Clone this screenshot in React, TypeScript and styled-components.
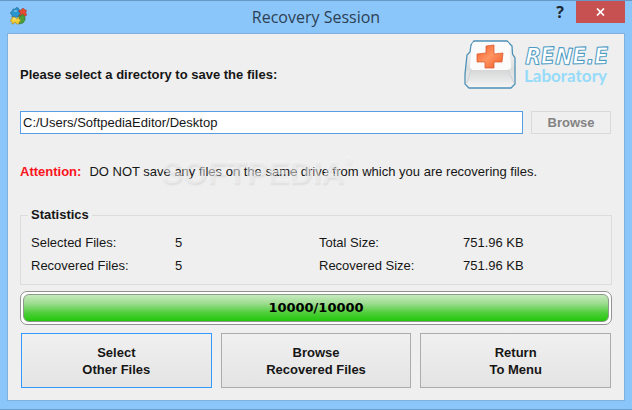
import React, { useState } from "react";
import styled, { createGlobalStyle } from "styled-components";

const GlobalStyle = createGlobalStyle`
  *, *::before, *::after { box-sizing: border-box; }
  body {
    margin: 0;
    font: 13px/16px "Liberation Sans", Arial, sans-serif;
    color: #161616;
    background: #8bc6fb;
  }
`;

const Window = styled.div`
  min-height: 100vh;
  display: flex;
  flex-direction: column;
  padding: 0 7px 8px;
  background: #8bc6fb;
  border-top: 1px solid #6798c4;
  border-bottom: 1px solid #6ca0cf;
`;

const TitleBar = styled.header`
  display: grid;
  grid-template-columns: 1fr auto 1fr;
  align-items: start;
  height: 32px;
`;

const AppIcon = styled.svg`
  margin: 6px 0 0 2px;
`;

const Title = styled.h1`
  margin: 5px 0 0;
  font: 400 16px/22px "Open Sans", sans-serif;
  color: #2d4052;
`;

const Controls = styled.div`
  display: flex;
  justify-content: flex-end;
`;

const HelpButton = styled.button`
  width: 32px;
  height: 22px;
  padding: 0;
  border: 0;
  background: none;
  color: #1c2833;
  font: 700 16px/22px "Open Sans", sans-serif;
`;

const CloseButton = styled.button`
  display: grid;
  place-items: center;
  width: 49px;
  height: 22px;
  padding: 0;
  border: 0;
  background: #c75050;
`;

const Client = styled.main`
  flex: 1;
  display: flex;
  flex-direction: column;
  padding: 6px 12px 12px;
  background: #efefef;
  border: 1px solid #7fb0df;
`;

const Intro = styled.div`
  display: flex;
  justify-content: space-between;
  height: 71px;
`;

const Prompt = styled.label`
  padding-top: 27px;
  font-weight: 700;
`;

const Brand = styled.div`
  display: flex;
  align-items: flex-start;
  gap: 8px;
`;

const PathRow = styled.div`
  display: flex;
  gap: 8px;
  height: 23px;
  padding-right: 1px;
`;

const PathInput = styled.input`
  flex: 1;
  min-width: 0;
  padding: 0 2px;
  border: 1px solid #569de5;
  border-radius: 0;
  outline: none;
  background: #fff;
  color: #161616;
  font: inherit;
`;

const BrowseButton = styled.button`
  width: 80px;
  padding: 0;
  border: 1px solid #d9d9d9;
  background: #efefef;
  color: #838383;
  font: inherit;
  font-weight: 700;
`;

const Notice = styled.p`
  position: relative;
  display: flex;
  gap: 8px;
  margin: 30px 0 0;
`;

const Attention = styled.strong`
  color: #fb1420;
`;

const Watermark = styled.span`
  position: absolute;
  left: 141px;
  top: -10px;
  display: flex;
  font: 700 32px/36px "Liberation Sans", Arial, sans-serif;
  color: rgba(244, 244, 244, 0.5);
  -webkit-text-stroke: 1px rgba(244, 244, 244, 0.4);
  text-shadow: 1px 2px 2px rgba(0, 0, 0, 0.08);
  pointer-events: none;

  sup {
    font-size: 10px;
    line-height: 14px;
  }
`;

const Statistics = styled.fieldset`
  min-width: 0;
  margin: 27px 0 0;
  padding: 12px 10px 10px;
  border: 1px solid #dcdcdc;

  legend {
    margin-left: -3px;
    padding: 0 3px;
    font-weight: 700;
  }
`;

const StatGrid = styled.dl`
  display: grid;
  grid-template-columns: 1fr 1fr;
  column-gap: 6px;
  row-gap: 7px;
  margin: 0;
`;

const Stat = styled.div`
  display: grid;
  grid-template-columns: 1fr 1fr;
  column-gap: 6px;

  dt, dd { margin: 0; }
`;

const ProgressTrack = styled.div`
  height: 34px;
  margin-top: 6px;
  padding: 2px;
  border: 1px solid #929292;
  border-radius: 7px;
  background: #fff;
`;

const ProgressFill = styled.div`
  display: grid;
  place-items: center;
  height: 100%;
  border: 1px solid #8d9a8a;
  border-radius: 6px;
  background: linear-gradient(#c5eabd, #a1dd94 30%, #4ccd37 70%, #23c80c);
  font: 700 13px/16px "DejaVu Sans", Verdana, sans-serif;
  color: #000;
`;

const Actions = styled.div`
  display: grid;
  grid-template-columns: repeat(3, 1fr);
  gap: 9px;
  margin-top: 8px;
  padding: 0 1px;
  flex: 1;
`;

const ActionButton = styled.button<{ $primary?: boolean }>`
  min-height: 55px;
  padding: 0;
  border: 1px solid ${(p) => (p.$primary ? "#3399ff" : "#acacac")};
  border-radius: 0;
  background: linear-gradient(#f0f0f0, #e4e4e4);
  color: #161616;
  font: inherit;
  font-weight: 700;
  line-height: 17px;

  span { display: block; }
`;

const stats = [
  ["Selected Files:", "5"],
  ["Total Size:", "751.96 KB"],
  ["Recovered Files:", "5"],
  ["Recovered Size:", "751.96 KB"],
];

const actions = [
  ["Select", "Other Files"],
  ["Browse", "Recovered Files"],
  ["Return", "To Menu"],
];

function PuzzleIcon() {
  return (
    <AppIcon width="19" height="19" viewBox="0 0 19 19" aria-hidden="true">
      <path d="M4 2h2.500a1.500 1.500 0 0 1 3 0H10v3a1.500 1.500 0 0 1 0 3v2H3V7.500a1.500 1.500 0 0 1 0-3z" fill="#2795ce" stroke="#236a91" strokeWidth=".6" />
      <path d="M10 3l2.500 .5a1.500 1.500 0 0 1 3-1l2 1-1 2.500a1.500 1.500 0 0 1-1 3L14 10l-4-1V8a1.500 1.500 0 0 0 0-3z" fill="#e94b2e" stroke="#9c382b" strokeWidth=".6" />
      <path d="M10 9h2a1.500 1.500 0 0 1 3 0l1 1v3l-2 3-4 1v-3a1.500 1.500 0 0 1 0-3z" fill="#4b9f38" stroke="#316f2d" strokeWidth=".6" />
      <path d="M3 10h3a1.500 1.500 0 0 0 3 0h1v2a1.500 1.500 0 0 1 0 3v2H7.500a1.500 1.500 0 0 0-3 0H3v-2a1.500 1.500 0 0 1 0-3z" fill="#efce37" stroke="#9d852d" strokeWidth=".6" />
      <path d="M5 4h3M4 12h3" stroke="#fff" strokeOpacity=".55" />
    </AppIcon>
  );
}

function BrandKey() {
  return (
    <svg width="52" height="49" viewBox="0 0 52 49" aria-hidden="true">
      <defs>
        <linearGradient id="keySide" x2="0" y2="1">
          <stop stopColor="#fff" />
          <stop offset=".6" stopColor="#dcdddd" />
          <stop offset="1" stopColor="#f2f2f2" />
        </linearGradient>
        <linearGradient id="keyFront" x2="0" y2="1">
          <stop stopColor="#d4d5d6" />
          <stop offset="1" stopColor="#f4f4f4" />
        </linearGradient>
        <linearGradient id="cross" x2="1" y2="1">
          <stop stopColor="#ef5d27" />
          <stop offset=".5" stopColor="#ff9563" />
          <stop offset="1" stopColor="#ed5724" />
        </linearGradient>
      </defs>
      <path d="M10 1h33l5 5 .5 8 2.500 4v26l-4 4H5l-4-4V34l2-19 3-3 1-7z" fill="url(#keySide)" stroke="#4e91b6" strokeWidth="1.300" />
      <path d="M8 29h35l7 14-4 4H6l-4-4z" fill="url(#keyFront)" />
      <path d="M11 2h31q3 0 3 3l2 21q0 4-5 4H10q-4 0-4-4L8 5q0-3 3-3z" fill="#fbfbfb" />
      <path d="M7 30L3 43M44 30l6 13" stroke="#cdd1d3" strokeWidth="1" fill="none" />
      <path d="M22 6l8-1v9l9-1-1 9h-8v6h-9v-6h-8v-8l9-1z" fill="url(#cross)" stroke="#d95127" strokeWidth=".7" />
    </svg>
  );
}

function BrandName() {
  return (
    <svg width="88" height="49" viewBox="0 0 88 49" role="img" aria-label="RENE.E Laboratory">
      <text x="1" y="24" rotate="2 -3 3 -2 0 -2" fontFamily='"DejaVu Sans Condensed", "DejaVu Sans", sans-serif' fontSize="23" fontWeight="700" fontStyle="italic" fill="#fff" stroke="#4b9bc3" strokeWidth="1" strokeLinejoin="round">RENE.E</text>
      <text x="0" y="42" fontFamily="Lato, sans-serif" fontSize="17" fontWeight="700" fill="#96dbfa">Laboratory</text>
    </svg>
  );
}

export default function App() {
  const [path, setPath] = useState("C:/Users/SoftpediaEditor/Desktop");

  return (
    <>
      <GlobalStyle />
      <Window>
        <TitleBar>
          <PuzzleIcon />
          <Title>Recovery Session</Title>
          <Controls>
            <HelpButton type="button" aria-label="Help">?</HelpButton>
            <CloseButton type="button" aria-label="Close">
              <svg width="9" height="8" viewBox="0 0 9 8" aria-hidden="true">
                <path d="M1 .5l7 7M8 .5l-7 7" stroke="#fff" strokeWidth="1.700" />
              </svg>
            </CloseButton>
          </Controls>
        </TitleBar>
        <Client>
          <Intro>
            <Prompt htmlFor="directory">Please select a directory to save the files:</Prompt>
            <Brand>
              <BrandKey />
              <BrandName />
            </Brand>
          </Intro>
          <PathRow>
            <PathInput id="directory" value={path} onChange={(e) => setPath(e.target.value)} />
            <BrowseButton type="button" disabled>Browse</BrowseButton>
          </PathRow>
          <Notice>
            <Attention>Attention:</Attention>
            <span>DO NOT save any files on the same drive from which you are recovering files.</span>
            <Watermark>SOFTPEDIA<sup>®</sup></Watermark>
          </Notice>
          <Statistics>
            <legend>Statistics</legend>
            <StatGrid>
              {stats.map(([label, value]) => (
                <Stat key={label}>
                  <dt>{label}</dt>
                  <dd>{value}</dd>
                </Stat>
              ))}
            </StatGrid>
          </Statistics>
          <ProgressTrack role="progressbar" aria-label="Recovery progress" aria-valuenow={10000} aria-valuemin={0} aria-valuemax={10000}>
            <ProgressFill>10000/10000</ProgressFill>
          </ProgressTrack>
          <Actions>
            {actions.map(([first, second], i) => (
              <ActionButton key={second} type="button" $primary={i === 0}>
                <span>{first}</span>
                <span>{second}</span>
              </ActionButton>
            ))}
          </Actions>
        </Client>
      </Window>
    </>
  );
}
